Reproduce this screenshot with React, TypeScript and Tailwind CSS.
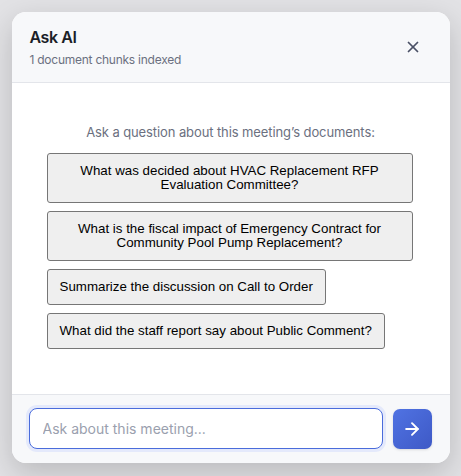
import React from 'react';
import { X, ArrowRight } from 'lucide-react';

const suggestions = [
  'What was decided about HVAC Replacement RFP Evaluation Committee?',
  'What is the fiscal impact of Emergency Contract for Community Pool Pump Replacement?',
  'Summarize the discussion on Call to Order',
  'What did the staff report say about Public Comment?',
];

export default function App() {
  return (
    <div
      className="min-h-screen bg-[#e2e2e5] flex justify-center pt-[12px]"
      style={{ fontFamily: 'Inter, "Noto Sans", sans-serif' }}
    >
      <div className="w-[438px] h-[451px] rounded-[14px] bg-white overflow-hidden flex flex-col shadow-[0_10px_30px_rgba(0,0,0,0.18)]">
        {/* Header */}
        <div className="bg-[#f7f8fa] border-b border-[#e3e5ea] pl-[18px] pr-[21px] pt-[13px] pb-[14px] flex items-center justify-between">
          <div>
            <h2 className="text-[16px] leading-[24px] font-semibold tracking-[-0.4px] text-[#1b1e27]">Ask AI</h2>
            <p className="mt-[3px] text-[12px] leading-[16px] tracking-[-0.25px] text-[#6b7080]">1 document chunks indexed</p>
          </div>
          <button className="w-8 h-8 flex items-center justify-center text-[#4a5066]">
            <X size={18} strokeWidth={2.3} />
          </button>
        </div>

        {/* Body */}
        <div className="flex-1 pt-[40px] px-[35px]">
          <p className="text-center text-[13px] leading-[18px] tracking-[-0.1px] text-[#6b7080] mb-[12px]">
            Ask a question about this meeting’s documents:
          </p>
          <div className="w-[366px] flex flex-col items-start gap-2">
            {suggestions.map((s) => (
              <button
                key={s}
                className="max-w-full bg-[#efefef] border border-[#767676] rounded-[3px] px-[12px] py-[10px] text-[13.33px] leading-[14px] text-black text-center"
                style={{ fontFamily: '"Liberation Sans", Arial, sans-serif' }}
              >
                {s}
              </button>
            ))}
          </div>
        </div>

        {/* Footer */}
        <div className="bg-[#f7f8fa] border-t border-[#e3e5ea] pl-[17px] pr-[18px] pt-[13px] pb-[14px] flex items-center gap-[10px]">
          <input
            autoFocus
            placeholder="Ask about this meeting..."
            className="flex-1 h-[41px] rounded-[8px] border border-[#4a6cdb] bg-white px-[13px] text-[14px] text-[#1b1e27] placeholder:text-[#9aa0ae] outline-none ring-[3px] ring-[#e4e9fb]"
          />
          <button className="w-[39px] h-[40px] rounded-[7px] bg-gradient-to-br from-[#5073e3] to-[#3e59c6] text-white flex items-center justify-center shadow-sm">
            <ArrowRight size={20} strokeWidth={2.3} />
          </button>
        </div>
      </div>
    </div>
  );
}
